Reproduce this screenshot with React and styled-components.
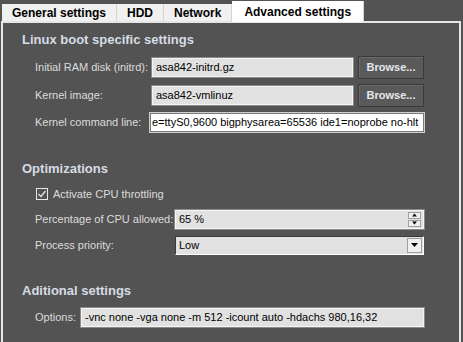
import React from "react";
import styled, { createGlobalStyle } from "styled-components";

const Global = createGlobalStyle`
  html, body { margin: 0; padding: 0; background: #535353; }
  body { font-family: "Liberation Sans", Arial, sans-serif; font-size: 11px; color: #dedede; }
  #root { width: 463px; height: 342px; overflow: hidden; }
`;

const Page = styled.div`
  width: 463px;
  height: 342px;
  display: flex;
  flex-direction: column;
  background: #535353;
`;

const TabBar = styled.div`
  display: flex;
  align-items: flex-end;
  height: 21px;
  padding-left: 2px;
`;

const Tab = styled.div`
  height: ${(p) => (p.$active ? "21px" : "17px")};
  padding: 0 ${(p) => (p.$active ? "12px" : "10px")};
  margin-bottom: ${(p) => (p.$active ? "-1px" : "0")};
  background: ${(p) => (p.$active ? "#ffffff" : "#f0f0f0")};
  border-right: 1px solid #d4d4d4;
  box-sizing: border-box;
  display: flex;
  align-items: center;
  font-weight: bold;
  font-size: 12px;
  color: #000;
  position: relative;
  z-index: 1;
`;

const Panel = styled.div`
  flex: 1;
  margin: 0 2px 0 1px;
  border: 2px solid #e6e6e6;
  border-bottom: none;
  box-sizing: border-box;
  padding: 8px 0 0 19px;
`;

const Section = styled.div`
  display: flex;
  flex-direction: column;
  margin-bottom: ${(p) => p.$gap || 0}px;
`;

const SectionTitle = styled.div`
  font-weight: bold;
  font-size: 13px;
  color: #d6dce4;
  height: 18px;
  line-height: 18px;
  margin-bottom: ${(p) => p.$mb || 0}px;
`;

const Row = styled.div`
  display: grid;
  grid-template-columns: ${(p) => p.$label}px ${(p) => p.$field}px ${(p) => (p.$button ? "71px" : "")};
  align-items: center;
  padding-left: 13px;
  height: ${(p) => p.$h || 28}px;
  margin-top: ${(p) => p.$mt || 0}px;
`;

const Label = styled.div`
  color: #dcdcdc;
  font-size: 11px;
  white-space: nowrap;
`;

const fieldBorder = (p) => {
  if (p.$focus) return "border: 1px solid #7a7a7a; outline: 1px solid #cfcfcf; background: #ffffff;";
  if (p.$sunken)
    return "border: 1px solid; border-color: #3a3a3a #ffffff #ffffff #3a3a3a; background: #e1e1e1;";
  return "border: 1px solid #f4f4f4; outline: 1px solid #8a8a8a; outline-offset: 0; background: #e1e1e1;";
};

const Field = styled.div`
  height: 19px;
  box-sizing: border-box;
  ${fieldBorder}
  color: #000;
  font-size: 11px;
  display: flex;
  align-items: center;
  padding: 0 ${(p) => (p.$tight ? "1px" : "3px")};
  overflow: hidden;
  white-space: nowrap;
  position: relative;
`;

const Button = styled.button`
  height: 23px;
  width: 66px;
  margin-left: 5px;
  box-sizing: border-box;
  background: #5a5a5a;
  border: 1px solid #3a3a3a;
  box-shadow: inset 1px 1px 0 #6a6a6a;
  color: #e4e8ee;
  font-family: "Liberation Sans", Arial, sans-serif;
  font-weight: bold;
  font-size: 11px;
  padding: 0;
`;

const CheckRow = styled.label`
  display: flex;
  align-items: center;
  gap: 5px;
  padding-left: 14px;
  height: 16px;
  color: #dcdcdc;
  font-size: 11px;
  margin-top: 8px;
`;

const Box = styled.span`
  width: 12px;
  height: 12px;
  box-sizing: border-box;
  border: 1px solid #e8e8e8;
  display: flex;
  align-items: center;
  justify-content: center;
`;

const Spin = styled.div`
  position: absolute;
  right: 2px;
  top: 1px;
  bottom: 1px;
  width: 13px;
  display: flex;
  flex-direction: column;
  gap: 1px;
`;

const SpinBtn = styled.div`
  flex: 1;
  background: #f0f0f0;
  border: 1px solid #a0a0a0;
  display: flex;
  align-items: center;
  justify-content: center;
`;

const Drop = styled.div`
  position: absolute;
  right: 1px;
  top: 1px;
  bottom: 1px;
  width: 15px;
  background: #f0f0f0;
  border: 1px solid #a0a0a0;
  box-sizing: border-box;
  display: flex;
  align-items: center;
  justify-content: center;
`;

const Tri = ({ up, w = 7 }) => (
  <svg width={w} height={4} viewBox="0 0 7 4">
    {up ? <path d="M3.5 0 L7 4 L0 4 Z" fill="#000" /> : <path d="M0 0 L7 0 L3.5 4 Z" fill="#000" />}
  </svg>
);

export default function App() {
  return (
    <Page>
      <Global />
      <TabBar>
        <Tab>General settings</Tab>
        <Tab>HDD</Tab>
        <Tab>Network</Tab>
        <Tab $active>Advanced settings</Tab>
      </TabBar>
      <Panel>
        <Section $gap={25}>
          <SectionTitle $mb={4}>Linux boot specific settings</SectionTitle>
          <Row $label={117} $field={201} $button>
            <Label>Initial RAM disk (initrd):</Label>
            <Field>asa842-initrd.gz</Field>
            <Button>Browse...</Button>
          </Row>
          <Row $label={117} $field={201} $button>
            <Label>Kernel image:</Label>
            <Field>asa842-vmlinuz</Field>
            <Button>Browse...</Button>
          </Row>
          <Row $label={115} $field={274} $h={26}>
            <Label>Kernel command line:</Label>
            <Field $focus $tight>e=ttyS0,9600 bigphysarea=65536 ide1=noprobe no-hlt</Field>
          </Row>
        </Section>
        <Section $gap={27}>
          <SectionTitle>Optimizations</SectionTitle>
          <CheckRow>
            <Box>
              <svg width="10" height="10" viewBox="0 0 10 10">
                <path d="M1.5 5 L4 7.5 L8.5 2" fill="none" stroke="#e8e8e8" strokeWidth="1.3" />
              </svg>
            </Box>
            Activate CPU throttling
          </CheckRow>
          <Row $label={140} $field={249} $h={20} $mt={7}>
            <Label>Percentage of CPU allowed:</Label>
            <Field>
              65 %
              <Spin>
                <SpinBtn><Tri up w={5} /></SpinBtn>
                <SpinBtn><Tri w={5} /></SpinBtn>
              </Spin>
            </Field>
          </Row>
          <Row $label={140} $field={249} $h={20} $mt={6}>
            <Label>Process priority:</Label>
            <Field $sunken>
              Low
              <Drop><Tri /></Drop>
            </Field>
          </Row>
        </Section>
        <Section>
          <SectionTitle $mb={7}>Aditional settings</SectionTitle>
          <Row $label={46} $field={343} $h={20}>
            <Label>Options:</Label>
            <Field>-vnc none -vga none -m 512 -icount auto -hdachs 980,16,32</Field>
          </Row>
        </Section>
      </Panel>
    </Page>
  );
}
